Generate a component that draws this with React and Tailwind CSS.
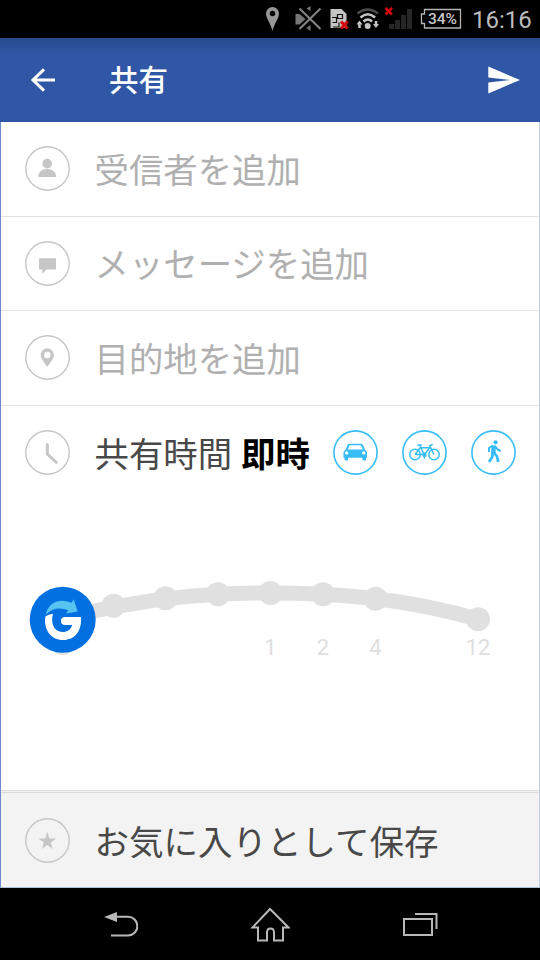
import React, { useState } from 'react';

const fontClass = 'font-["Noto_Sans_CJK_JP","Noto_Sans",sans-serif]';

const fields = [
    { id: 'recipient', label: '受信者を追加', icon: <PersonIcon /> },
    { id: 'message', label: 'メッセージを追加', icon: <MessageIcon /> },
    { id: 'destination', label: '目的地を追加', icon: <PlaceIcon /> },
];

const stops = [
    { x: 62.5, y: 620.5 },
    { x: 113.5, y: 605.8 },
    { x: 165.5, y: 598.3 },
    { x: 218, y: 594.3 },
    { x: 270.5, y: 593, label: '1' },
    { x: 323, y: 594.3, label: '2' },
    { x: 375.5, y: 598.8, label: '4' },
    { x: 478, y: 619.3, label: '12' },
];

function IconCircle({ children }) {
    return (
        <svg className="size-[45px] shrink-0 text-[#c6c6c6]" viewBox="0 0 45 45" fill="currentColor">
            <circle cx="22.5" cy="22.5" r="21.7" fill="none" stroke="currentColor" strokeWidth="1.4" />
            {children}
        </svg>
    );
}

function PersonIcon() {
    return (
        <>
            <circle cx="22.2" cy="17.6" r="4.8" />
            <path d="M13.2 31c0-5 3.6-8 9-8s9 3 9 8z" />
        </>
    );
}

function MessageIcon() {
    return <path d="M14 17.2h17v11.300h-9.500l-4.200 4.500v-4.500H14z" />;
}

function PlaceIcon() {
    return (
        <path
            fillRule="evenodd"
            d="M22.300 13.300a6.600 6.600 0 0 0-6.600 6.600c0 4.500 3.600 7 6.600 12 3-5 6.600-7.500 6.600-12a6.600 6.600 0 0 0-6.600-6.600zm0 3.500a3.200 3.200 0 1 1 0 6.400 3.200 3.200 0 0 1 0-6.400z"
        />
    );
}

function ClockIcon() {
    return <path d="M22.300 14.500v9.500l9 8.300" fill="none" stroke="currentColor" strokeWidth="3" strokeLinecap="round" strokeLinejoin="round" />;
}

function StarIcon() {
    return <path d="M22.300 13.800l2.100 6.600h6.800l-5.500 4 2.100 6.500-5.500-4-5.500 4 2.100-6.500-5.500-4h6.800z" />;
}

function CarIcon() {
    return (
        <path
            fillRule="evenodd"
            d="M16.500 13.700h11.500c1 0 1.600.5 2 1.300l2.200 5 1.800 1.800v6h-1v1.700c0 1.600-3.600 1.600-3.600 0v-1.700H15.100v1.700c0 1.600-3.600 1.600-3.600 0v-1.700h-1v-6l1.800-1.800 2.200-5c.4-.8 1-1.300 2-1.300zm.2 1.500l-2 4.300h15.100l-2-4.300zM13.700 21.200a1.700 1.700 0 1 0 0 3.400 1.700 1.700 0 0 0 0-3.400zm17.100 0a1.700 1.700 0 1 0 0 3.400 1.700 1.700 0 0 0 0-3.400z"
        />
    );
}

function BikeIcon() {
    return (
        <g fill="none" stroke="currentColor" strokeWidth="1.500">
            <circle cx="13" cy="24.500" r="5.200" />
            <circle cx="32" cy="24.500" r="5.200" />
            <path d="M13 24.500l5.200-6.800h9.600l-5.400 6.800H13M22.400 24.500l-4.700-9M32 24.500l-4.300-8.800 3-1.200M15.300 15h4.500" />
            <circle cx="22.400" cy="24.700" r="1.500" fill="currentColor" />
            <path d="M22.400 26v2.500" />
        </g>
    );
}

function WalkIcon() {
    return (
        <>
            <circle cx="24.600" cy="12.300" r="2.100" />
            <g fill="none" stroke="currentColor" strokeLinejoin="round">
                <path d="M22.800 15.300l-.6 8" strokeWidth="4.500" />
                <path d="M22 15.700l-4 2.300v4M24.500 16.500l2 3 3.200 1.500" strokeWidth="2" />
                <path d="M21.800 22l-.6 5-3.200 5M23 22.500l3 4 1.300 5.500" strokeWidth="2.800" />
            </g>
        </>
    );
}

function StatusBar() {
    return (
        <div className="flex h-[38px] items-center bg-black pl-[262px]">
            <svg className="h-[38px] w-[200px]" viewBox="262 0 200 38">
                {/* location */}
                <path fill="#979797" fillRule="evenodd" d="M272.500 7a6.500 6.500 0 0 0-6.500 6.500c0 5 4.300 9 6.500 17.500 2.200-8.500 6.500-12.500 6.500-17.500a6.500 6.500 0 0 0-6.500-6.500zm0 3.800a2.700 2.700 0 1 1 0 5.400 2.700 2.700 0 0 1 0-5.400z" />
                {/* muted speaker */}
                <path fill="#777" d="M295.500 14h4l6 5-6 5.500h-4zM306.500 8.500l4-2.500v5zM306.500 28l4 3v-6z" />
                <path stroke="#858585" strokeWidth="2" d="M299.500 8.500l21 20.500M320.500 8.500l-21 20.500" />
                {/* sim */}
                <path fill="#c4c4c4" d="M330.500 9h11l5 5v14h-16z" />
                <path fill="none" stroke="#111" strokeWidth="1.200" d="M332 17.500h4.500v5h-4M337.500 14.500h5v4h-5zM339 22.500v5M333 27h6" />
                <path stroke="#d4080c" strokeWidth="3" d="M341 21.500l6.500 7M347.500 21.500l-6.500 7" />
                {/* wifi */}
                <g fill="none">
                    <path stroke="#4c4c4c" strokeWidth="2.500" d="M357.500 13.500q10-8 20.500 0" />
                    <path stroke="#c4c4c4" strokeWidth="2.500" d="M360.500 17.500q7.300-6.500 14.600 0M363.500 21.500q4.300-4 8.600 0" />
                    <path stroke="#c4c4c4" strokeWidth="2.500" d="M359.500 22.500v5.500M376 21v4.500" />
                </g>
                <path fill="#c4c4c4" d="M356.500 24.500l3-4 3 4zM373 24l3 4 3-4z" />
                <circle cx="367.700" cy="26" r="3" fill="#c4c4c4" />
                {/* signal */}
                <path fill="#262626" d="M389 24h5v5h-5zM395 20h5v9h-5zM401 15h5v14h-5zM407 9h5v20h-5z" />
                <path stroke="#d4080c" strokeWidth="2.500" d="M385.500 8l6.500 6.500M392 8l-6.500 6.500" />
                {/* battery */}
                <path fill="none" stroke="#b5b5b5" strokeWidth="1.300" d="M424.500 9.500h36v18.500h-36v-4.500h-3v-9.500h3z" />
                <text x="442.500" y="24.300" textAnchor="middle" fill="#c8c8c8" fontSize="15.500" fontWeight="500" fontFamily="Roboto, sans-serif">34%</text>
            </svg>
            <span className="mt-0.5 ml-2.5 font-[Roboto,sans-serif] text-[24px] leading-none text-[#bcbcbc]">16:16</span>
        </div>
    );
}

function Header() {
    return (
        <header className="flex h-[84px] items-center bg-linear-to-b from-[#284a8d] from-0% via-[#2f57a5] via-20% to-[#2f57a5] pr-5 pl-[30px] text-white">
            <svg className="h-6 w-[26px]" viewBox="0 0 26 24" fill="none" stroke="currentColor" strokeWidth="3">
                <path d="M14 1.300L3 12l11 10.700M2.500 12H25" />
            </svg>
            <h1 className="mb-0.5 ml-[53px] text-[29.500px] leading-none font-medium">共有</h1>
            <svg className="ml-auto h-7 w-8" viewBox="0 0 32 28" fill="currentColor">
                <path d="M.3.500L32 14 .3 27.500V16.500l22-2.500-22-2.500z" />
            </svg>
        </header>
    );
}

function ModeButton({ label, selected, onClick, children }) {
    return (
        <button aria-label={label} aria-pressed={selected} onClick={onClick}>
            <svg className="size-[45px] text-[#38bdf8]" viewBox="0 0 45 45" fill="currentColor">
                <circle cx="22.500" cy="22.500" r="21.600" fill="none" stroke="currentColor" strokeWidth="1.600" />
                {children}
            </svg>
        </button>
    );
}

function GlympseKnob() {
    return (
        <g>
            <circle cx="62.700" cy="619.700" r="33" fill="#0270e0" />
            <path
                fill="#fff"
                d="M45.300 616.500Q48 614.200 53 613.700C50.500 622 53.500 632 62.500 632c5 0 8.500-2.500 9.600-7H65a4 4 0 0 1 0-8h16c1 14-6 23-18 23s-19.500-10-17.700-23.500z"
            />
            <path fill="#56c3f0" d="M45.700 614.700C48 603.500 58 597 71.600 602.800l2.100-3.500 4 12.200-11.700 2 2.300-3c-8-3.500-16-2.500-22.600 4.200z" />
        </g>
    );
}

function DurationSlider() {
    return (
        <svg className="h-[200px] w-full" viewBox="1 520 538 200">
            <path d="M62.500 618C150 597 210 593 270.500 593S400 597 478 619.300" fill="none" stroke="#e0e0e0" strokeWidth="15" />
            {stops.map(stop => (
                <g key={stop.x}>
                    <circle cx={stop.x} cy={stop.y} r="12" fill="#e0e0e0" />
                    {stop.label &&
                        <text x={stop.x} y="655" textAnchor="middle" fill="#dedede" fontSize="22" fontFamily="Roboto, sans-serif">
                            {stop.label}
                        </text>
                    }
                </g>
            ))}
            <circle cx="62.700" cy="643" r="12" fill="#e0e0e0" />
            <GlympseKnob />
        </svg>
    );
}

function NavBar() {
    return (
        <nav className="flex h-[72px] items-center justify-between bg-black px-[102px]">
            <svg className="h-[72px] w-9" viewBox="102 888 36 72" fill="none" stroke="#b8b8b8" strokeWidth="2">
                <path d="M116 916.800h12a9.300 9.300 0 0 1 0 18.700h-17" />
                <path d="M104 917l13-5v10z" fill="#b8b8b8" stroke="none" />
            </svg>
            <svg className="h-[72px] w-10" viewBox="250 888 40 72" fill="none" stroke="#b8b8b8" strokeWidth="2">
                <path d="M270 909L252.500 927.500h5.500v13h9v-8c0-5.500 7-5.500 7 0v8h9v-13h5.500z" />
            </svg>
            <svg className="h-[72px] w-9" viewBox="402 888 36 72" fill="none" stroke="#b8b8b8" strokeWidth="2">
                <path d="M404 919h28v16h-28zM415 914h21.500v15" />
            </svg>
        </nav>
    );
}

export default function App() {
    const [mode, setMode] = useState(null);

    return (
        <div className={`flex h-[960px] w-[540px] flex-col overflow-hidden bg-white ${fontClass}`}>
            <StatusBar />
            <Header />
            <main className="flex h-[766px] flex-col border-r border-b border-l border-r-[#c5cde4] border-b-[#aebfdf] border-l-[#6a8bcd]">
                {fields.map(field => (
                    <button key={field.id} className="flex h-[94.500px] shrink-0 items-center border-b border-[#e3e3e3] pl-6 text-left">
                        <IconCircle>{field.icon}</IconCircle>
                        <span className="mb-0.5 ml-[24.500px] text-[34.400px] leading-none text-[#b0b0b0]">{field.label}</span>
                    </button>
                ))}
                <div className="flex h-[94px] shrink-0 items-center pr-[23px] pl-6">
                    <IconCircle><ClockIcon /></IconCircle>
                    <p className="ml-[24.500px] text-[34.400px] leading-none whitespace-nowrap text-[#484848]">
                        共有時間<b className="ml-[9px] font-bold text-black">即時</b>
                    </p>
                    <div className="ml-auto flex gap-6">
                        <ModeButton label="車" selected={mode === 'car'} onClick={() => setMode('car')}><CarIcon /></ModeButton>
                        <ModeButton label="自転車" selected={mode === 'bike'} onClick={() => setMode('bike')}><BikeIcon /></ModeButton>
                        <ModeButton label="徒歩" selected={mode === 'walk'} onClick={() => setMode('walk')}><WalkIcon /></ModeButton>
                    </div>
                </div>
                <div className="flex-1 pt-5">
                    <DurationSlider />
                </div>
                <button className="flex h-[97px] shrink-0 items-center border-t-[3px] border-double border-[#dcdcdc] bg-[#f3f3f3] pl-6 text-left">
                    <IconCircle><StarIcon /></IconCircle>
                    <span className="ml-[24.500px] text-[34.500px] leading-none text-[#484848]">お気に入りとして保存</span>
                </button>
            </main>
            <NavBar />
        </div>
    );
}
